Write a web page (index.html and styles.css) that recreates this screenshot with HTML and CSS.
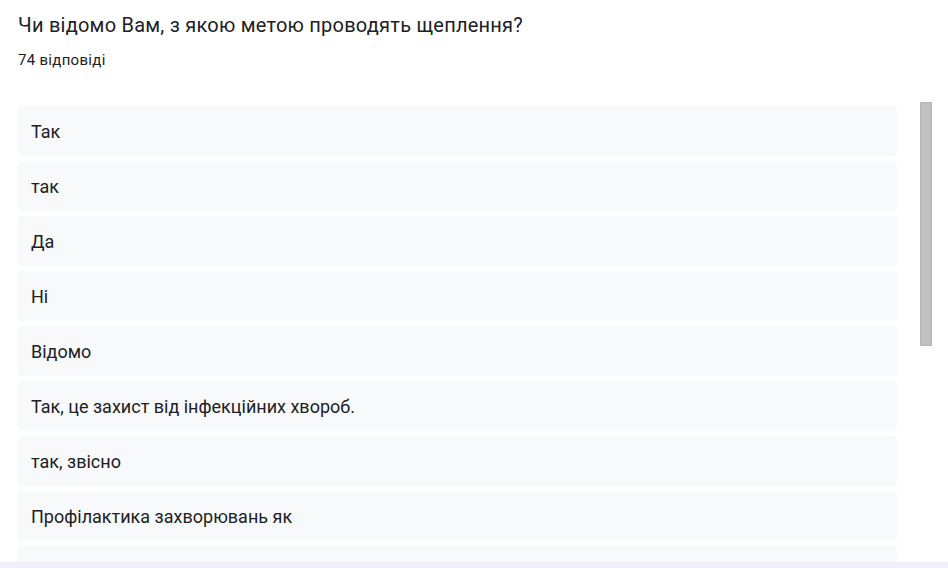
FILE: index.html
```html
<!DOCTYPE html>
<html lang="uk">

<head>
    <meta charset="UTF-8">
    <meta name="viewport" content="width=device-width, initial-scale=1.0">
    <title>Відповіді</title>
    <link rel="stylesheet" href="styles.css">
</head>

<body>
    <div class="page">
        <div class="head">
            <div class="title">Чи відомо Вам, з якою метою проводять щеплення?</div>
            <div class="count">74 відповіді</div>
        </div>
        <div class="results">
            <div class="list">
                <div class="row">Так</div>
                <div class="row">так</div>
                <div class="row">Да</div>
                <div class="row">Ні</div>
                <div class="row">Відомо</div>
                <div class="row">Так, це захист від інфекційних хвороб.</div>
                <div class="row">так, звісно</div>
                <div class="row">Профілактика захворювань як</div>
                <div class="row"></div>
            </div>
            <div class="track">
                <div class="thumb"></div>
            </div>
        </div>
    </div>
    <div class="foot"></div>
</body>

</html>
```

FILE: styles.css
```css
* {
    padding: 0;
    margin: 0;
    box-sizing: border-box;
}

body {
    width: 948px;
    height: 568px;
    overflow: hidden;
    background: #fff;
    font-family: Roboto, "Liberation Sans", sans-serif;
    color: #202124;
    display: flex;
    flex-direction: column;
}

.page {
    flex: 1;
    overflow: hidden;
}

.head {
    padding: 11px 18px 0;
}

.title {
    font-size: 20px;
    line-height: 28px;
    letter-spacing: .23px;
}

.count {
    margin-top: 11px;
    font-size: 15px;
    line-height: 20px;
    letter-spacing: .3px;
}

.results {
    margin-top: 32px;
    display: flex;
    padding-left: 18px;
}

.list {
    width: 879px;
    padding-top: 4px;
    display: flex;
    flex-direction: column;
    gap: 5px;
}

.row {
    height: 50px;
    flex-shrink: 0;
    background: #f8f9fa;
    border-radius: 4px;
    padding-left: 13px;
    display: flex;
    align-items: center;
    font-size: 18px;
}

.track {
    margin-left: 23px;
    width: 12px;
}

/* повзунок прокрутки */
.thumb {
    height: 244px;
    background: #c1c1c1;
    border: 1px solid #b4b4b4;
}

.foot {
    height: 6px;
    background: #f0eef8;
}
```
